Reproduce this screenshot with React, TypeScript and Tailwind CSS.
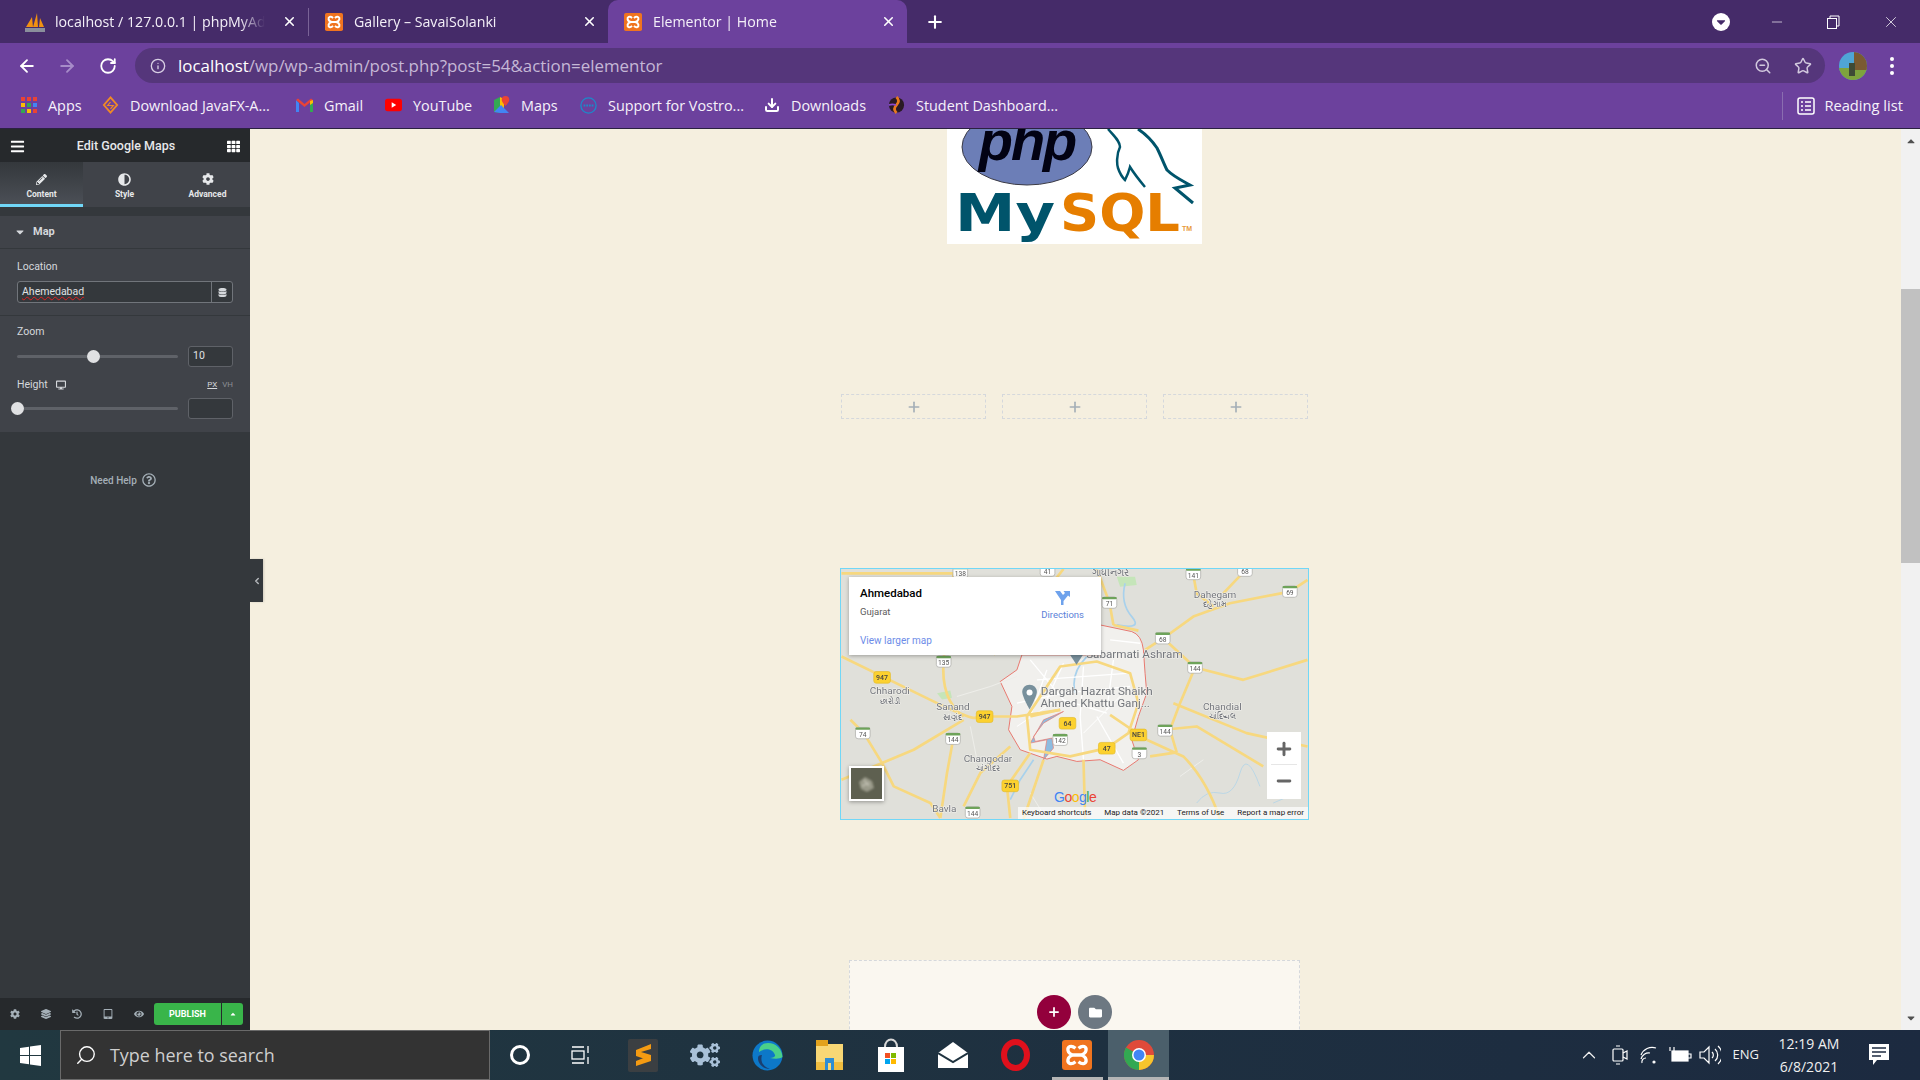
import { ArrowLeft, ArrowRight, RotateCw, Info, ZoomOut, Star, Plus, X, Minus, Search, ChevronLeft, ChevronUp, Download } from "lucide-react"
import { FaPencilAlt, FaAdjust, FaCog, FaCogs, FaDatabase, FaDesktop, FaLayerGroup, FaHistory, FaEye, FaFolder, FaTh, FaBars, FaRegQuestionCircle, FaCaretDown, FaCaretUp, FaTabletAlt } from "react-icons/fa"
import type { ReactNode } from "react"

function XamppIcon({ size = 18 }: { size?: number }) {
  return (
    <svg width={size} height={size} viewBox="0 0 20 20" className="shrink-0">
      <rect width="20" height="20" rx="2" fill="#f0741f" />
      <path d="M9 5.500C6 3 3.500 4.500 4 7c.3 1.600 2 2.600 3.500 3C6 10.400 4.300 11.400 4 13c-.5 2.500 2 4 5 1.500M11 5.500C14 3 16.500 4.500 16 7c-.3 1.600-2 2.600-3.500 3 1.500.4 3.200 1.400 3.500 3 .5 2.500-2 4-5 1.500M7 10h6" fill="none" stroke="#fff" strokeWidth="2.200" />
    </svg>
  )
}

function PmaIcon() {
  return (
    <svg width="22" height="22" viewBox="0 0 22 22" className="shrink-0">
      <path d="M2 16 8 6l1 10zM9 16l4-14 1 14zM15 16l1-9 4 9z" fill="#f29111" />
      <path d="M1 17h20v4H1z" fill="#8a8f9c" />
    </svg>
  )
}

function Tab({ icon, title, active, className }: { icon: ReactNode; title: string; active?: boolean; className: string }) {
  return (
    <div className={`flex h-[43px] w-[299px] items-center pr-[11px] ${active ? "rounded-t-[10px] bg-[#6c419d]" : ""} ${className}`}>
      {icon}
      <span className="flex-1 overflow-hidden whitespace-nowrap text-[14.200px] text-[#f4f0f8] [mask-image:linear-gradient(90deg,#000_88%,transparent)]">{title}</span>
      <X size={15} strokeWidth={2.5} className="ml-[8px] shrink-0 text-white" />
    </div>
  )
}

function Bookmark({ icon, label, width }: { icon: ReactNode; label: string; width: string }) {
  return (
    <div className={`flex items-center gap-[11px] ${width}`}>
      <span className="flex w-[17px] shrink-0 justify-center">{icon}</span>
      <span className="whitespace-nowrap text-[14.400px] text-[#f6f1fa]">{label}</span>
    </div>
  )
}

function TabBar() {
  return (
    <div className="flex h-[43px] items-center bg-[#452b69]">
      <div className="flex h-full items-center pl-[9px]">
        <Tab className="gap-[9px] pl-[15px]" icon={<PmaIcon />} title="localhost / 127.0.0.1 | phpMyAdmin" />
        <div className="h-[28px] w-px bg-[#7a6397]" />
        <Tab className="gap-[11px] pl-[16px]" icon={<XamppIcon />} title="Gallery – SavaiSolanki" />
        <Tab className="gap-[11px] pl-[16px]" icon={<XamppIcon />} title="Elementor | Home" active />
      </div>
      <Plus size={20} strokeWidth={2.5} className="ml-[18px] text-white" />
      <div className="ml-auto flex items-center">
        <div className="mr-[39px] flex h-[18px] w-[18px] items-center justify-center rounded-full bg-white">
          <FaCaretDown size={14} className="text-[#452b69]" />
        </div>
        <Minus size={16} strokeWidth={1} className="mr-[41px] text-white" />
        <svg width="14" height="14" viewBox="0 0 14 14" className="mr-[42px]" fill="none" stroke="#fff"><rect x="1.500" y="3.500" width="9" height="10" /><path d="M4 3.500V1h9v10h-2.500" /></svg>
        <X size={18} strokeWidth={1} className="mr-[20px] text-white" />
      </div>
    </div>
  )
}

function Toolbar() {
  return (
    <div className="flex h-[45px] items-center bg-[#6c419d]">
      <ArrowLeft size={20} strokeWidth={2.2} className="ml-[17px] text-white" />
      <ArrowRight size={20} strokeWidth={2.2} className="ml-[20px] text-[#a78cc9]" />
      <RotateCw size={18} strokeWidth={2.4} className="ml-[22px] text-white" />
      <div className="ml-[18px] flex h-[35px] w-[1690px] items-center rounded-full bg-[#55367b] pl-[15px] pr-[13px]">
        <Info size={16} strokeWidth={2} className="text-[#d8cfe4]" />
        <span className="ml-[12px] whitespace-nowrap text-[16.900px] text-white">localhost<span className="text-[#c5b8d6]">/wp/wp-admin/post.php?post=54&amp;action=elementor</span></span>
        <ZoomOut size={18} strokeWidth={2} className="ml-auto text-[#d2c9de]" />
        <Star size={18} strokeWidth={2} className="ml-[22px] text-[#d2c9de]" />
      </div>
      <svg width="28" height="28" viewBox="0 0 28 28" className="ml-[14px]">
        <defs><clipPath id="avatar"><circle cx="14" cy="14" r="14" /></clipPath></defs>
        <g clipPath="url(#avatar)">
          <rect width="28" height="28" fill="#4fa5d6" />
          <rect y="16" width="28" height="12" fill="#7ea33d" />
          <rect x="15" width="13" height="18" fill="#7a5a32" />
          <rect x="10" y="11" width="6" height="13" fill="#3e4a36" />
        </g>
      </svg>
      <div className="ml-[23px] flex flex-col gap-[3px]">
        <span className="h-[4px] w-[4px] rounded-full bg-white" />
        <span className="h-[4px] w-[4px] rounded-full bg-white" />
        <span className="h-[4px] w-[4px] rounded-full bg-white" />
      </div>
    </div>
  )
}

function BookmarksBar() {
  return (
    <div className="flex h-[41px] items-center border-b border-[#2b2140] bg-[#6c419d] pb-[5px] pl-[20px]">
      <Bookmark width="w-[82px]" label="Apps" icon={
        <svg width="16" height="16" viewBox="0 0 16 16">
          <rect width="4" height="4" fill="#ea4335" /><rect x="6" width="4" height="4" fill="#ea4335" /><rect x="12" width="4" height="4" fill="#ea4335" />
          <rect y="6" width="4" height="4" fill="#fbbc05" /><rect x="6" y="6" width="4" height="4" fill="#34a853" /><rect x="12" y="6" width="4" height="4" fill="#4285f4" />
          <rect y="12" width="4" height="4" fill="#34a853" /><rect x="6" y="12" width="4" height="4" fill="#fbbc05" /><rect x="12" y="12" width="4" height="4" fill="#ea4335" />
        </svg>} />
      <Bookmark width="w-[194px]" label="Download JavaFX-A..." icon={
        <svg width="18" height="18" viewBox="0 0 18 18" fill="none" stroke="#f08a24" strokeWidth="2"><path d="M9 1 16 9 9 17 2 9z" /><path d="M9 6 6 9.500h6L9 13" strokeWidth="1.200" /></svg>} />
      <Bookmark width="w-[89px]" label="Gmail" icon={
        <svg width="17" height="14" viewBox="0 0 17 14"><path d="M0 2v12h3V5z" fill="#4285f4" /><path d="M17 2v12h-3V5z" fill="#34a853" /><path d="M0 2 2 .5 8.500 6 15 .5 17 2 8.500 9z" fill="#ea4335" /><path d="M14 3 17 2V5l-3 2z" fill="#fbbc05" /></svg>} />
      <Bookmark width="w-[108px]" label="YouTube" icon={
        <svg width="19" height="14" viewBox="0 0 19 14"><rect width="19" height="14" rx="3" fill="#f00" /><path d="M7.500 4v6l5-3z" fill="#fff" /></svg>} />
      <Bookmark width="w-[87px]" label="Maps" icon={
        <svg width="17" height="18" viewBox="0 0 17 18"><path d="M1 4 7 1v16l-6-1z" fill="#34a853" /><path d="M7 1 11 3v14l-4 0z" fill="#fbbc05" /><path d="M1 16 8 9l8 8H7z" fill="#4285f4" /><path d="M12.500 0a3.800 3.800 0 0 0-3.800 3.800c0 2.500 3.800 6.200 3.800 6.200s3.800-3.700 3.800-6.200A3.800 3.800 0 0 0 12.500 0z" fill="#ea4335" /></svg>} />
      <Bookmark width="w-[183px]" label="Support for Vostro..." icon={
        <svg width="19" height="19" viewBox="0 0 19 19"><circle cx="9.500" cy="9.500" r="8.500" fill="none" stroke="#1d89c9" strokeWidth="1.500" /><path d="M4 9.500h11" stroke="#1d89c9" strokeWidth="2.500" strokeDasharray="2 1" /></svg>} />
      <Bookmark width="w-[125px]" label="Downloads" icon={<Download size={16} strokeWidth={3} className="text-white" />} />
      <Bookmark width="w-[200px]" label="Student Dashboard..." icon={
        <svg width="19" height="20" viewBox="0 0 19 20"><circle cx="9.500" cy="10" r="8.500" fill="#2a1a24" /><path d="M9.500 1c3 3 3 6 0 9s-3 6 0 9" fill="none" stroke="#e8791d" strokeWidth="3" /><path d="M1 10c3-1 5-1 8 0" stroke="#8a4ad0" strokeWidth="2" /></svg>} />
      <div className="ml-auto flex h-[28px] items-center border-l border-[#8a6db0] pl-[14px] pr-[17px]">
        <svg width="18" height="18" viewBox="0 0 18 18" fill="none" stroke="#fff" strokeWidth="1.500"><rect x="1" y="1" width="16" height="16" rx="2" /><path d="M4 5h2M8 5h6M4 9h2M8 9h6M4 13h2M8 13h6" /></svg>
        <span className="ml-[9px] whitespace-nowrap text-[14.700px] text-[#f6f1fa]">Reading list</span>
      </div>
    </div>
  )
}

function PanelTab({ icon, label, active }: { icon: ReactNode; label: string; active?: boolean }) {
  return (
    <div className={active ? "flex w-[83px] flex-col items-center border-b-[3px] border-[#71d7f7] bg-linear-to-b from-[#34383c] to-[#4b4f56] pt-[10px] text-[#e6e8ea]" : "flex w-[83px] flex-col items-center pt-[10px] text-[#e6e8ea]"}>
      <span className="flex h-[14px] items-center">{icon}</span>
      <span className="mt-[3px] text-[8.500px] font-bold leading-[11px]">{label}</span>
    </div>
  )
}

function Slider({ at }: { at: string }) {
  return (
    <div className="relative h-[3px] w-[161px] rounded-full bg-[#5f6268]">
      <span className={`absolute top-[-5px] h-[13px] w-[13px] rounded-full bg-[#e0e1e3] ${at}`} />
    </div>
  )
}

function Sidebar() {
  return (
    <aside className="flex w-[250px] shrink-0 flex-col bg-[#34383c] font-['Roboto',sans-serif] text-[11px] text-[#d5d8dc]">
      <div className="flex h-[33px] items-center justify-between bg-[#26292c] px-[10px] pt-px">
        <FaBars size={15} className="text-white" />
        <span className="text-[12.500px] font-medium text-[#e6e8ea]">Edit Google Maps</span>
        <FaTh size={13} className="text-white" />
      </div>
      <div className="flex h-[45px] bg-[#404349]">
        <PanelTab active label="Content" icon={<FaPencilAlt size={11} />} />
        <PanelTab label="Style" icon={<FaAdjust size={13} />} />
        <PanelTab label="Advanced" icon={<FaCog size={12} />} />
      </div>
      <div className="h-[9px]" />
      <div className="bg-[#404349]">
        <div className="flex h-[33px] items-center border-b border-[#34383c] pl-[14px] text-[#d5d8dc]">
          <FaCaretDown size={12} />
          <span className="ml-[7px] text-[11px] font-bold">Map</span>
        </div>
        <div className="h-[67px] border-b border-[#34383c] px-[17px] pt-[11px]">
          <div className="text-[10.500px] leading-[14px]">Location</div>
          <div className="mt-[7px] flex h-[22px] rounded-[3px] border border-[#71757b] bg-[#34383c]">
            <span className="flex-1 pl-[4px] text-[10.500px] leading-[20px] text-[#e0e2e5] underline decoration-[#e02020] decoration-wavy decoration-1">Ahemedabad</span>
            <span className="flex w-[21px] items-center justify-center border-l border-[#71757b]"><FaDatabase size={9} /></span>
          </div>
        </div>
        <div className="h-[116px] px-[17px] pt-[9px]">
          <div className="text-[10.500px] leading-[14px]">Zoom</div>
          <div className="mt-[7px] flex h-[20px] items-center justify-between">
            <Slider at="left-[70px]" />
            <div className="flex h-[21px] w-[45px] items-center rounded-[3px] border border-[#5f6268] bg-[#34383c] pl-[4px] text-[10.500px] text-[#e0e2e5]">10</div>
          </div>
          <div className="mt-[12px] flex h-[14px] items-center text-[10.500px] leading-[14px]">
            <span>Height</span>
            <FaDesktop size={10} className="ml-[8px]" />
            <span className="ml-auto text-[8px] underline">PX</span>
            <span className="ml-[5px] text-[8px] text-[#8b8f95]">VH</span>
          </div>
          <div className="mt-[6px] flex h-[20px] items-center justify-between">
            <Slider at="left-[-6px]" />
            <div className="h-[21px] w-[45px] rounded-[3px] border border-[#5f6268] bg-[#34383c]" />
          </div>
        </div>
      </div>
      <div className="mt-[41px] flex h-[14px] items-center justify-center gap-[5px] pr-[4px] text-[10px] font-medium text-[#a4afb7]">
        <span>Need Help</span>
        <FaRegQuestionCircle size={14} />
      </div>
      <div className="mt-auto flex h-[32px] items-center bg-[#26292c] pl-[10px] text-[#a4afb7]">
        <FaCog size={10} />
        <FaLayerGroup size={10} className="ml-[21px]" />
        <FaHistory size={10} className="ml-[21px]" />
        <FaTabletAlt size={10} className="ml-[21px]" />
        <FaEye size={10} className="ml-[21px]" />
        <div className="ml-[10px] flex h-[22px] w-[67px] items-center justify-center rounded-l-[3px] bg-[#39b54a] pt-px text-[9px] font-bold text-white">PUBLISH</div>
        <div className="ml-px flex h-[22px] w-[21px] items-center justify-center rounded-r-[3px] bg-[#39b54a] text-white"><FaCaretUp size={8} /></div>
      </div>
    </aside>
  )
}

function PhpMysqlLogo() {
  return (
    <div className="h-[115px] w-[255px] shrink-0 overflow-hidden bg-white">
      <svg width="255" height="115" viewBox="0 0 255 115">
        <ellipse cx="80" cy="18" rx="65" ry="38" fill="#6c7eb7" stroke="#3b3b46" strokeWidth="1" />
        <text x="80" y="31" textAnchor="middle" fontFamily="Liberation Sans" fontWeight="700" fontStyle="italic" fontSize="56" fill="#020213" letterSpacing="-2">php</text>
        <path d="M161 0C167 7 173 12 173 18 169 26 170 36 171 39 173 45 176 49 178 51 180 47 182 42 183 38 188 46 193 52 198 58" fill="none" stroke="#00546b" strokeWidth="2.500" />
        <path d="M191 0C200 6 206 13 210 19 214 27 217 35 220 41 227 48 236 52 243 56L228 59 246 74" fill="none" stroke="#00546b" strokeWidth="3" />
        <text x="8" y="102" fontFamily="DejaVu Sans" fontWeight="700" fontSize="52" fill="#00546b" textLength="100" lengthAdjust="spacingAndGlyphs">My</text>
        <text x="113" y="102" fontFamily="DejaVu Sans" fontWeight="700" fontSize="52" fill="#e67e00" textLength="120" lengthAdjust="spacingAndGlyphs">SQL</text>
        <text x="235" y="102" fontFamily="Liberation Sans" fontWeight="700" fontSize="7" fill="#e89a3c">TM</text>
      </svg>
    </div>
  )
}

const greenShields: [string, number, number][] = [
  ["138", 390, 38], ["41", 652, 32], ["141", 1090, 42], ["68", 1245, 32], ["69", 1380, 95], ["71", 838, 128], ["68", 998, 235],
  ["135", 340, 305], ["144", 1095, 323], ["144", 1005, 512], ["74", 97, 520], ["144", 368, 537], ["142", 690, 540], ["3", 928, 580], ["144", 427, 758],
]

const yellowShields: [string, number, number][] = [
  ["947", 155, 352], ["947", 463, 470], ["64", 712, 490], ["47", 830, 565], ["NE1", 925, 525], ["751", 540, 678],
]

const placeLabels: [string, number, number, number][] = [
  ["Dahegam", 1155, 113, 30], ["દહેગામ", 1155, 142, 25], ["Chharodi", 178, 403, 30], ["છારોડી", 178, 432, 25], ["Sanand", 368, 452, 30], ["સાણંદ", 368, 482, 25],
  ["Changodar", 473, 606, 30], ["ચાંગોદર", 473, 634, 25], ["Chandial", 1177, 450, 30], ["ચાંદિયલ", 1177, 478, 25], ["Bavla", 342, 758, 30], ["ગાંધીનગર", 842, 48, 30],
  ["Sabarmati Ashram", 913, 293, 35], ["Dargah Hazrat Shaikh", 800, 407, 35], ["Ahmed Khattu Ganj...", 795, 443, 35],
]

function GoogleMap() {
  return (
    <div className="relative h-[252px] w-[469px] shrink-0 overflow-hidden border border-[#71d7f7] bg-[#e0e0da] font-['Roboto',sans-serif]">
      <svg width="467" height="250" viewBox="33 27 1400 751" className="blur-[0.4px]">
        <rect x="33" y="27" width="1400" height="751" fill="#e0e0da" />
        <path d="M860 50h55l5 25-50 5z" fill="#c5e5b9" />
        <path d="M320 400l40-8 5 22-30 5z" fill="#c5e5b9" />
        <path d="M810 195 905 215Q935 225 940 270L945 340 950 400 925 470 905 540 925 600 880 632 810 600 740 605 680 590 650 598 570 570 535 510 545 440 510 365 560 330 575 285 810 285z" fill="#f1f0ed" stroke="#e8786f" strokeWidth="3" />
        <g fill="none" stroke="#a8d1ec" strokeWidth="5">
          <path d="M885 70Q870 130 905 170T860 195" />
          <path d="M770 290Q720 340 735 400M610 600 570 660 540 720" />
          <path d="M1100 730Q1130 690 1170 700T1230 640 1290 680M1330 730 1400 700" strokeWidth="2" />
        </g>
        <path d="M700 455 640 490 610 530 615 545 665 535 670 565 640 600 650 540 600 550 640 480z" fill="#8dbce0" stroke="#e8786f" strokeWidth="2" />
        <g fill="none" stroke="#ffffff" strokeWidth="4">
          <path d="M600 300 700 420 830 460M650 330 600 470M760 320 750 470 760 600M850 300 830 450M900 380 700 400 560 430M620 360 900 340M800 470 880 610M700 310 650 420M840 240 930 250" />
          <path d="M880 400 760 520M560 500 680 420" strokeWidth="3" />
          <path d="M380 410 480 380 560 350M420 500 440 600M600 700 650 780M1050 650 1120 600" stroke="#eeeeea" strokeWidth="3" />
        </g>
        <g fill="none" stroke="#f7d87f" strokeWidth="8" strokeLinejoin="round">
          <path d="M33 290Q155 350 300 420T440 470H560L690 450" />
          <path d="M370 40Q350 180 340 300T400 470" />
          <path d="M60 480 100 520 155 610 250 570 400 480" />
          <path d="M155 610 33 660" />
          <path d="M155 610 190 680 300 730 330 775" />
          <path d="M370 530 350 640 330 775" />
          <path d="M540 560 450 640 400 740" />
          <path d="M540 775 530 680 600 580" />
          <path d="M800 27 838 128 850 195" />
          <path d="M1000 235 945 270M1000 235 1090 170 1200 130 1380 95 1433 60" />
          <path d="M1090 45 1100 100 1150 140M1245 32 1180 100" />
          <path d="M1095 323 1050 430 1020 510 1040 578" />
          <path d="M1095 323 1000 235" />
          <path d="M1030 430 1250 520 1433 560" />
          <path d="M950 540 1060 590Q1130 660 1170 778" />
          <path d="M1040 578 960 590M840 465 950 540M1095 323 1240 360 1433 300" />
          <path d="M590 470 600 570 720 590 830 565 895 520 925 430 900 340 800 305 690 320z" />
          <path d="M1000 510 1100 500 1300 620" />
          <path d="M700 27 650 90 570 130 490 285" />
          <path d="M760 600 765 778M580 778 640 600M850 195 925 212" />
          <path d="M33 40H200L370 40" />
          <path d="M600 470 690 450" />
        </g>
        {placeLabels.map(([label, x, y, size]) => (
          <text key={label} x={x} y={y} textAnchor="middle" fontSize={size} fill="#72757b" stroke="#f4f3ef" strokeWidth="3" paintOrder="stroke" fontFamily="Roboto">{label}</text>
        ))}
        <path d="M598 375c-13 0-22 10-22 21 0 15 22 53 22 53s22-38 22-53c0-11-9-21-22-21z" fill="#78909c" />
        <circle cx="598" cy="398" r="9" fill="#fff" />
        <path d="M720 285h38l-19 30z" fill="#78909c" />
        {greenShields.map(([n, x, y]) => (
          <g key={`${n}-${x}`}>
            <rect x={x - 22} y={y - 17} width="44" height="34" rx="8" fill="#fff" stroke="#a4a5a0" strokeWidth="2" />
            <rect x={x - 22} y={y - 17} width="44" height="7" rx="3" fill="#6ea35a" />
            <text x={x} y={y + 11} textAnchor="middle" fontSize="20" fontFamily="Roboto" fill="#555">{n}</text>
          </g>
        ))}
        {yellowShields.map(([n, x, y]) => (
          <g key={`${n}-${x}`}>
            <rect x={x - 25} y={y - 17} width="50" height="35" rx="7" fill="#fcd12f" stroke="#e3bb2a" strokeWidth="2" />
            <text x={x} y={y + 8} textAnchor="middle" fontSize="21" fontFamily="Roboto" fontWeight="500" fill="#444">{n}</text>
          </g>
        ))}
      </svg>
      <div className="absolute left-[8px] top-[8px] h-[78px] w-[252px] bg-white shadow-[0_1px_4px_rgba(0,0,0,0.3)]">
        <div className="pl-[11px] pt-[9px] text-[11.500px] font-medium leading-[14px] text-black">Ahmedabad</div>
        <div className="pl-[11px] pt-[6px] text-[9.500px] leading-[12px] text-[#5b5b5b]">Gujarat</div>
        <div className="pl-[11px] pt-[17px] text-[10px] leading-[12px] text-[#6d8ce8]">View larger map</div>
        <div className="absolute right-[17px] top-[13px] flex flex-col items-center">
          <svg width="17" height="15" viewBox="0 0 17 15"><path d="M1 1h5l3 4 2-2-1.500-2H16v6l-2-1.500L9.500 11v4H7v-5z" fill="#6ea2ec" /></svg>
          <span className="mt-[4px] text-[9.500px] leading-[12px] text-[#5b7fd8]">Directions</span>
        </div>
      </div>
      <div className="absolute left-[8px] top-[197px] h-[35px] w-[35px] border-2 border-white bg-[#5e6050] shadow-[0_1px_4px_rgba(0,0,0,0.35)]">
        <svg width="31" height="31" viewBox="0 0 31 31" className="blur-[1px]"><path d="M8 14 14 9l7 4 2 7-7 4-6-3z" fill="#9a9a8a" /><path d="M13 12l5 6M11 18l7-3" stroke="#bdbcae" strokeWidth="1.500" /></svg>
      </div>
      <div className="absolute right-[7px] top-[163px] flex h-[67px] w-[34px] flex-col items-center bg-white text-[#666]">
        <Plus size={20} strokeWidth={3.5} className="mt-[7px]" />
        <span className="mt-[5px] h-px w-[26px] bg-[#e6e6e6]" />
        <Minus size={20} strokeWidth={3.5} className="mt-[6px]" />
      </div>
      <div className="absolute left-[213px] top-[218px] text-[14px] font-medium tracking-[-0.5px] text-[#4285f4] [font-family:'Liberation_Sans',sans-serif]">
        G<span className="text-[#ea4335]">o</span><span className="text-[#fbbc05]">o</span>g<span className="text-[#34a853]">l</span><span className="text-[#ea4335]">e</span>
      </div>
      <div className="absolute bottom-0 right-0 flex h-[12px] w-[290px] items-center justify-between whitespace-nowrap bg-white/70 px-[4px] text-[8px] text-[#222]">
        <span>Keyboard shortcuts</span>
        <span>Map data ©2021</span>
        <span>Terms of Use</span>
        <span>Report a map error</span>
      </div>
    </div>
  )
}

function Canvas() {
  return (
    <main className="relative flex min-w-0 flex-1 flex-col items-center overflow-hidden bg-[#f5efdf] pr-[2px]">
      <PhpMysqlLogo />
      <div className="mt-[150px] flex h-[25px] w-[467px] shrink-0 gap-[16px]">
        {[0, 1, 2].map((i) => (
          <div key={i} className="flex flex-1 items-center justify-center border border-dashed border-[#d5d8dc] text-[#a4afb7]">
            <Plus size={16} strokeWidth={2.5} />
          </div>
        ))}
      </div>
      <div className="mt-[149px] shrink-0">
        <GoogleMap />
      </div>
      <div className="mt-[140px] flex h-[100px] w-[451px] shrink-0 justify-center gap-[7px] border border-dashed border-[#d5d8dc] bg-[#faf7f0] pt-[34px]">
        <div className="flex h-[34px] w-[34px] items-center justify-center rounded-full bg-[#93003c] text-white"><Plus size={14} strokeWidth={3} /></div>
        <div className="flex h-[34px] w-[34px] items-center justify-center rounded-full bg-[#6d7882] text-white"><FaFolder size={13} /></div>
      </div>
      <div className="absolute left-0 top-[430px] flex h-[43px] w-[13px] items-center justify-center bg-[#34383c] text-[#b5b8bc] shadow-[1px_0_2px_rgba(0,0,0,0.15)]">
        <ChevronLeft size={10} strokeWidth={3.5} />
      </div>
    </main>
  )
}

function Scrollbar() {
  return (
    <div className="flex w-[19px] shrink-0 flex-col items-center bg-[#f1f1f1]">
      <FaCaretUp size={12} className="mt-[6px] text-[#505050]" />
      <div className="mt-[142px] h-[274px] w-full bg-[#c1c1c1]" />
      <FaCaretDown size={12} className="mb-[6px] mt-auto text-[#505050]" />
    </div>
  )
}

function Taskbar() {
  return (
    <footer className="flex h-[50px] items-center bg-linear-to-r from-[#213840] to-[#1c2a40] font-['Open_Sans',sans-serif] text-white">
      <svg width="21" height="21" viewBox="0 0 21 21" className="ml-[20px]" fill="#fff"><path d="M0 3 9 1.700V10H0zM10 1.500 21 0v10H10zM0 11h9v8.300L0 18zM10 11h11v10l-11-1.500z" /></svg>
      <div className="ml-[19px] flex h-[50px] w-[430px] items-center border border-[#6a6a6a] bg-[#333333] pl-[14px] text-[#cfcfcf]">
        <Search size={22} strokeWidth={1.500} className="-scale-x-100 text-white" />
        <span className="ml-[13px] whitespace-nowrap text-[17.900px]">Type here to search</span>
      </div>
      <div className="flex h-full items-center">
        <div className="flex w-[60px] justify-center"><div className="h-[20px] w-[20px] rounded-full border-[3px] border-white" /></div>
        <div className="flex w-[62px] justify-center">
          <svg width="20" height="20" viewBox="0 0 20 20" fill="none" stroke="#fff" strokeWidth="1.300"><rect x="1" y="6" width="12" height="8" /><path d="M1 2h12M1 18h12M17 1v7M17 12v7" /></svg>
        </div>
        <div className="flex w-[62px] justify-center">
          <div className="flex h-[33px] w-[30px] items-center justify-center rounded-[2px] bg-[#3b3f42]">
            <svg width="17" height="24" viewBox="0 0 17 24"><path d="M16 1 1 7v6l15 5v-6L6 9l10-3zM1 23l15-5v-6L1 18z" fill="#f59b12" /></svg>
          </div>
        </div>
        <div className="flex w-[62px] justify-center"><FaCogs size={30} className="text-[#a9c1d8]" /></div>
        <div className="flex w-[62px] justify-center">
          <svg width="31" height="31" viewBox="0 0 31 31"><circle cx="15.500" cy="15.500" r="15" fill="#0d78c8" /><path d="M30.500 17C30 9 24 3 16 3 9 3 7 8 7 12c3-3 13-5 16 3 .7 2-2 3-5 3 5 1 10 1 12.500-1z" fill="#4ad08a" /><path d="M10 15c-2 6 1 12 8 14-7 0-12-5-12-11 0-2 1-3 4-3z" fill="#1a3f70" /></svg>
        </div>
        <div className="flex w-[62px] justify-center">
          <svg width="29" height="30" viewBox="0 0 29 30"><path d="M1 0h12v4h15v26H1z" fill="#f8d775" /><path d="M1 0h12v6H1z" fill="#e2a21d" /><path d="M1 22h27v8H1z" fill="#f0bd3f" /><rect x="10" y="18" width="9" height="12" fill="#2d8dd4" /><rect x="13" y="23" width="3" height="7" fill="#f8d775" /></svg>
        </div>
        <div className="flex w-[62px] justify-center">
          <svg width="30" height="34" viewBox="0 0 30 34"><path d="M2 9h26v25H2z" fill="#fff" /><path d="M9 9c0-10 12-10 12 0" fill="none" stroke="#d8d8d8" strokeWidth="2" /><rect x="9" y="15" width="5" height="5" fill="#f25022" /><rect x="15" y="15" width="5" height="5" fill="#7fba00" /><rect x="9" y="21" width="5" height="5" fill="#00a4ef" /><rect x="15" y="21" width="5" height="5" fill="#ffb900" /></svg>
        </div>
        <div className="flex w-[62px] justify-center">
          <svg width="30" height="26" viewBox="0 0 30 26"><path d="M15 0 30 11v15H0V11z" fill="#fff" /><path d="M0 11l15 9 15-9" fill="none" stroke="#1f3340" strokeWidth="2" /></svg>
        </div>
        <div className="flex w-[62px] justify-center">
          <svg width="29" height="32" viewBox="0 0 29 32"><ellipse cx="14.500" cy="16" rx="11.500" ry="13" fill="none" stroke="#e0101c" strokeWidth="6" /></svg>
        </div>
        <div className="relative flex h-[50px] w-[62px] items-center justify-center">
          <XamppIcon size={30} />
          <span className="absolute bottom-0 left-[6px] h-[3px] w-[51px] bg-[#b5b5b5]" />
        </div>
        <div className="relative flex h-[50px] w-[61px] items-center justify-center bg-[#4b5f6b]">
          <svg width="30" height="30" viewBox="0 0 30 30"><circle cx="15" cy="15" r="15" fill="#e04a3a" /><path d="M15 15 2 7.500A15 15 0 0 0 15 30z" fill="#32a852" /><path d="M15 15H30A15 15 0 0 1 15 30z" fill="#f7c52c" /><circle cx="15" cy="15" r="7" fill="#fff" /><circle cx="15" cy="15" r="5.500" fill="#4285f4" /></svg>
          <span className="absolute bottom-0 left-0 h-[3px] w-full bg-[#b5b5b5]" />
        </div>
      </div>
      <div className="ml-auto flex h-full items-center text-[#f0f0f0]">
        <ChevronUp size={22} strokeWidth={1.300} />
        <svg width="18" height="22" viewBox="0 0 18 22" className="ml-[11px]" fill="none" stroke="#fff" strokeWidth="1.200"><rect x="2" y="5" width="10" height="12" rx="1" /><path d="M12 9l4-2v8l-4-2M5 2h4M5 20h4" /></svg>
        <svg width="20" height="20" viewBox="0 0 20 20" className="ml-[11px]" fill="none" stroke="#fff" strokeWidth="1.200"><path d="M1 10a12 12 0 0 1 15-7M1 14a8 8 0 0 1 9-6M2 18a4 4 0 0 1 4-5" /><circle cx="14" cy="17" r="1" fill="#fff" /></svg>
        <svg width="24" height="18" viewBox="0 0 24 18" className="ml-[8px]" fill="none" stroke="#fff" strokeWidth="1.200"><rect x="4" y="5" width="16" height="10" fill="#fff" /><path d="M20 8h3v4h-3M2 1v4M6 1v4" /></svg>
        <svg width="22" height="22" viewBox="0 0 22 22" className="ml-[7px]" fill="none" stroke="#fff" strokeWidth="1.200"><path d="M1 8h4l5-5v16l-5-5H1zM13 8a4 4 0 0 1 0 6M16 5a8 8 0 0 1 0 12M19 2a12 12 0 0 1 0 18" /></svg>
        <span className="ml-[12px] text-[13px]">ENG</span>
        <div className="ml-[14px] flex w-[72px] flex-col items-center gap-[5px] text-[14px] leading-[18px]">
          <span className="whitespace-nowrap">12:19 AM</span>
          <span>6/8/2021</span>
        </div>
        <div className="ml-[24px] mr-[31px]">
          <svg width="20" height="22" viewBox="0 0 20 22"><path d="M0 0h20v16H8l-4 5v-5H0z" fill="#fff" /><path d="M3 4h14M3 8h14M3 12h9" stroke="#1c2a40" strokeWidth="1.300" /></svg>
        </div>
      </div>
    </footer>
  )
}

export default function App() {
  return (
    <div className="flex h-screen w-screen flex-col overflow-hidden font-['Open_Sans',sans-serif]">
      <TabBar />
      <Toolbar />
      <BookmarksBar />
      <div className="flex min-h-0 flex-1">
        <Sidebar />
        <Canvas />
        <Scrollbar />
      </div>
      <Taskbar />
    </div>
  )
}
